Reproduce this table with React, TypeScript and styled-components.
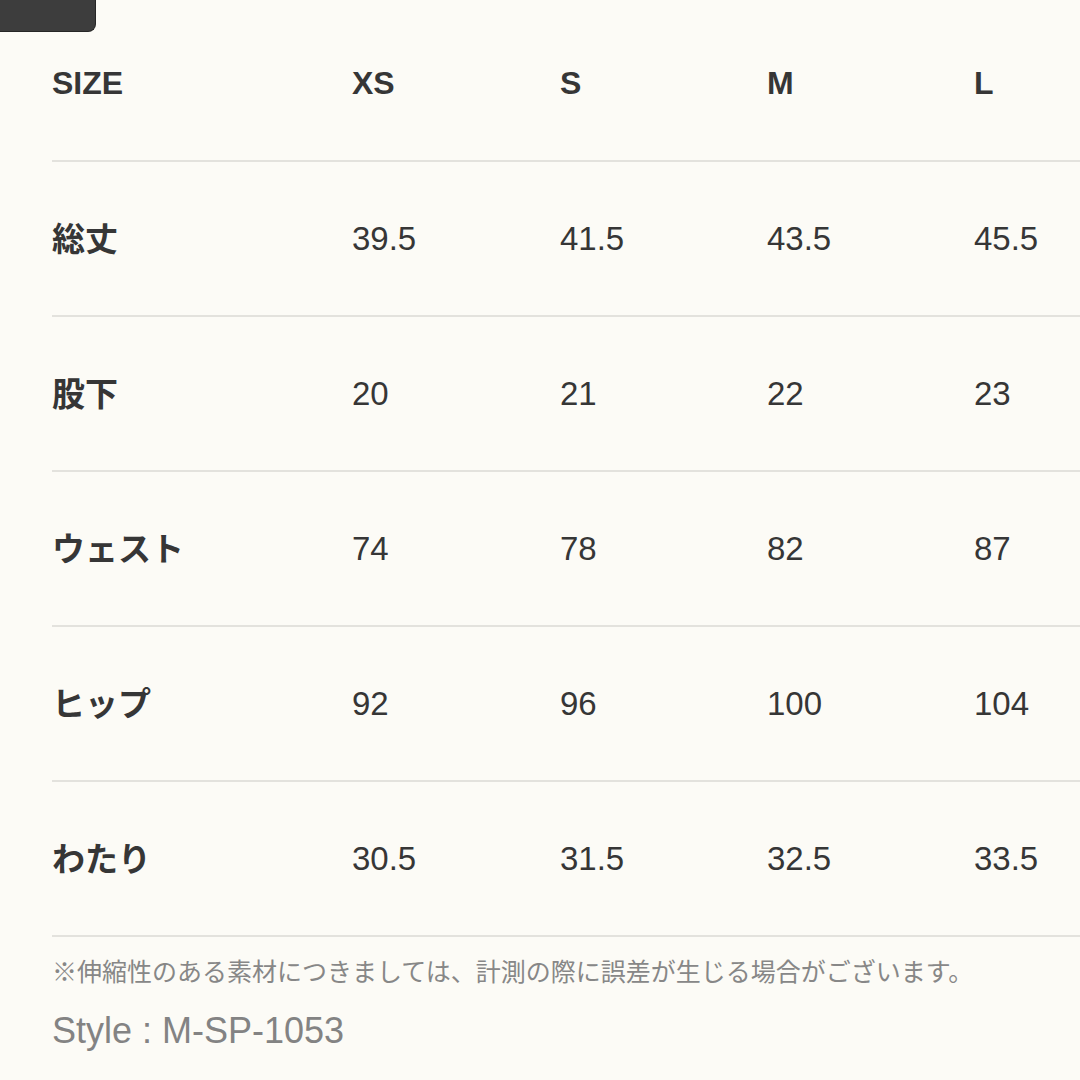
import React from "react";
import styled, { createGlobalStyle } from "styled-components";

const GlobalStyle = createGlobalStyle`
  html, body {
    margin: 0;
    padding: 0;
    background: #fcfbf6;
  }
  body {
    font-family: "Liberation Sans", "Noto Sans CJK JP", sans-serif;
    color: #363636;
  }
`;

const Page = styled.div`
  width: 1080px;
  height: 1080px;
  overflow: hidden;
  display: flex;
  flex-direction: column;
`;

const Tab = styled.div`
  width: 95px;
  height: 31px;
  background: #3d3d3d;
  border: 1px solid #262626;
  border-top: none;
  border-left: none;
  border-bottom-right-radius: 8px;
`;

const Table = styled.div`
  margin-left: 52px;
  display: flex;
  flex-direction: column;
`;

const Row = styled.div<{ $head?: boolean }>`
  display: grid;
  grid-template-columns: 300px 208px 207px 207px 1fr;
  align-items: center;
  height: ${(p) => (p.$head ? "103px" : "153px")};
  padding-bottom: ${(p) => (p.$head ? "25px" : "0")};
  border-bottom: 2px solid #e3e2dd;
`;

const Label = styled.div<{ $head?: boolean }>`
  font-size: ${(p) => (p.$head ? "32px" : "33px")};
  font-weight: 700;
  color: #363636;
  margin-bottom: ${(p) => (p.$head ? "0" : "4px")};
`;

const Cell = styled.div<{ $head?: boolean }>`
  font-size: ${(p) => (p.$head ? "32px" : "33px")};
  font-weight: ${(p) => (p.$head ? 700 : 400)};
  color: #363636;
  white-space: nowrap;
`;

const Note = styled.div`
  margin: 14px 0 0 52px;
  font-size: 25px;
  line-height: 38px;
  color: #878787;
  font-family: "Noto Sans CJK JP", sans-serif;
  white-space: nowrap;
`;

const StyleCode = styled.div`
  margin: 20px 0 0 52px;
  font-size: 36px;
  line-height: 44px;
  color: #838383;
`;

const sizes = ["XS", "S", "M", "L"];

const rows: { label: string; values: string[] }[] = [
  { label: "総丈", values: ["39.5", "41.5", "43.5", "45.5"] },
  { label: "股下", values: ["20", "21", "22", "23"] },
  { label: "ウェスト", values: ["74", "78", "82", "87"] },
  { label: "ヒップ", values: ["92", "96", "100", "104"] },
  { label: "わたり", values: ["30.5", "31.5", "32.5", "33.5"] },
];

export default function App(): JSX.Element {
  return (
    <>
      <GlobalStyle />
      <Page>
        <Tab />
        <Table>
          <Row $head>
            <Label $head>SIZE</Label>
            {sizes.map((s) => (
              <Cell key={s} $head>
                {s}
              </Cell>
            ))}
          </Row>
          {rows.map((r) => (
            <Row key={r.label}>
              <Label>{r.label}</Label>
              {r.values.map((v, i) => (
                <Cell key={i}>{v}</Cell>
              ))}
            </Row>
          ))}
        </Table>
        <Note>※伸縮性のある素材につきましては、計測の際に誤差が生じる場合がございます。</Note>
        <StyleCode>Style : M-SP-1053</StyleCode>
      </Page>
    </>
  );
}
